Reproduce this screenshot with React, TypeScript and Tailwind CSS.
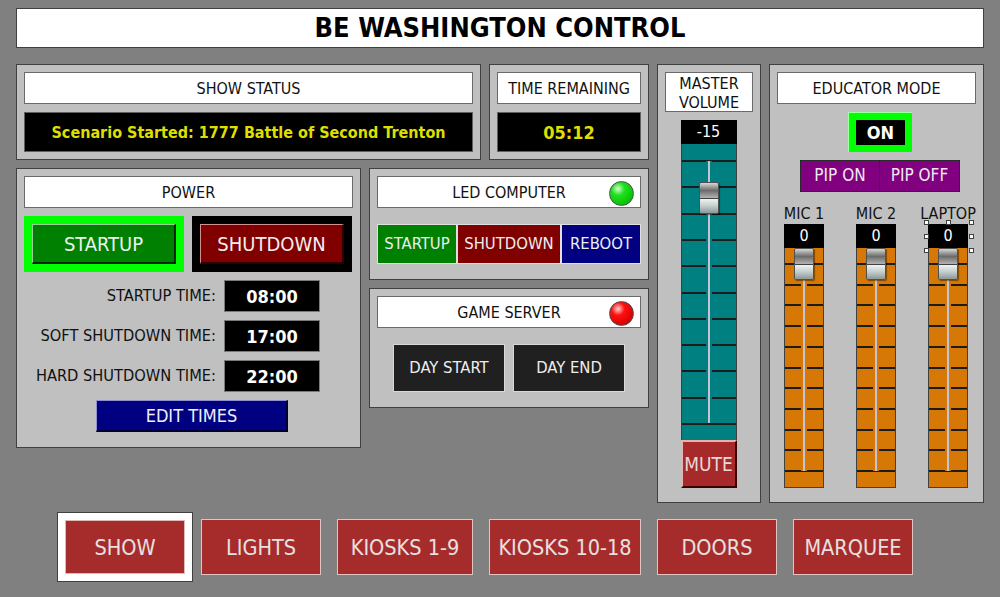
import React from 'react';

const FONT = "font-['DejaVu_Sans_Condensed','DejaVu_Sans',sans-serif]";

function Header({ children, className = '' }: { children: React.ReactNode; className?: string }) {
  return (
    <div className={`relative bg-white border border-[#6a6a6a] flex items-center justify-center text-[16px] text-[#111111] pt-[1px] ${className}`}>
      {children}
    </div>
  );
}

function Lamp({ on }: { on: boolean }) {
  return (
    <div
      className={`absolute right-[6px] top-[4px] w-[25px] h-[25px] rounded-full border border-[#505050] ${
        on
          ? 'bg-[radial-gradient(circle_at_35%_30%,#d0ffd0_0%,#20e020_30%,#00c000_80%)]'
          : 'bg-[radial-gradient(circle_at_35%_30%,#ffd0d0_0%,#ff1010_30%,#d00000_80%)]'
      }`}
    />
  );
}

function Thumb({ top }: { top: number }) {
  return (
    <div
      className="absolute left-1/2 -translate-x-1/2 w-[20px] h-[32px] border border-[#505050] rounded-[2px] flex flex-col overflow-hidden shadow-[1px_1px_1px_rgba(0,0,0,0.4)]"
      style={{ top }}
    >
      <div className="flex-1 bg-linear-to-b from-[#d8d8d8] via-[#6c6c6c] to-[#b4b4b4]" />
      <div className="h-[1px] bg-[#404040]" />
      <div className="flex-1 bg-linear-to-b from-[#eef4f4] via-[#c4cccc] to-[#8e9898]" />
    </div>
  );
}

function Fader({
  color,
  height,
  first,
  step,
  thumbTop,
  trackEnd,
}: {
  color: string;
  height: number;
  first: number;
  step: number;
  thumbTop: number;
  trackEnd: number;
}) {
  const ticks = Array.from({ length: 11 }, (_, i) => first + i * step);
  return (
    <div className="relative w-full" style={{ height }}>
      {ticks.map((t) => (
        <div key={t} className="absolute left-0 right-0 h-[2px] bg-[#1c1c1c]" style={{ top: Math.round(t) - 1 }} />
      ))}
      <div
        className="absolute left-1/2 -translate-x-1/2 w-[6px] flex justify-center"
        style={{ top: first, height: trackEnd - first, backgroundColor: color }}
      >
        <div className="w-[2px] h-full bg-[#c4c4d4]" />
      </div>
      <Thumb top={thumbTop} />
    </div>
  );
}

function MicFader({ label, handles }: { label: string; handles?: boolean }) {
  return (
    <div className="w-[40px] flex flex-col items-center">
      <div className="h-[32px] w-[40px] flex items-end justify-center text-[16px] text-[#111111] whitespace-nowrap leading-[18px]">
        <span className="relative top-[-1px]">{label}</span>
      </div>
      <div className="relative w-[40px] h-[24px] bg-black text-white text-[16px] flex items-center justify-center">
        0
        {handles &&
          [
            [-2, -2],
            [20.5, -2],
            [43, -2],
            [-2, 12],
            [43, 12],
            [-2, 26],
            [20.5, 26],
            [43, 26],
          ].map(([x, y], i) => (
            <div
              key={i}
              className="absolute w-[5px] h-[5px] bg-white border border-[#404040]"
              style={{ left: x - 2.5, top: y - 2.5 }}
            />
          ))}
      </div>
      <div className="w-[40px] bg-[#d57806] border border-[#404040] border-t-0">
        <Fader color="#d57806" height={239} first={16} step={20.7} thumbTop={0} trackEnd={223} />
      </div>
    </div>
  );
}

export default function App() {
  const tabs = [
    { name: 'LIGHTS', w: 'w-[120px]', ml: 'ml-[8px]' },
    { name: 'KIOSKS 1-9', w: 'w-[136px]', ml: 'ml-[16px]' },
    { name: 'KIOSKS 10-18', w: 'w-[152px]', ml: 'ml-[16px]' },
    { name: 'DOORS', w: 'w-[120px]', ml: 'ml-[16px]' },
    { name: 'MARQUEE', w: 'w-[120px]', ml: 'ml-[16px]' },
  ];

  const times = [
    { label: 'STARTUP TIME:', value: '08:00' },
    { label: 'SOFT SHUTDOWN TIME:', value: '17:00' },
    { label: 'HARD SHUTDOWN TIME:', value: '22:00' },
  ];

  return (
    <div className={`w-[1000px] h-[597px] bg-[#808080] overflow-hidden pt-[8px] px-[16px] ${FONT}`}>
      {/* Title */}
      <div className="h-[40px] bg-white border border-[#404040] flex items-center justify-center text-[27px] font-bold text-black pt-[1px]">
        BE WASHINGTON CONTROL
      </div>

      <div className="mt-[16px] flex gap-[8px] h-[439px]">
        {/* Left column */}
        <div className="w-[633px] flex flex-col gap-[8px]">
          <div className="flex gap-[8px] h-[96px]">
            <div className="w-[465px] bg-[#c0c0c0] border border-[#404040] p-[7px] flex flex-col gap-[8px]">
              <Header className="h-[32px]">SHOW STATUS</Header>
              <div className="h-[40px] bg-black border border-[#606060] flex items-center justify-center text-[16px] font-bold text-[#dede00] pt-[1px]">
                Scenario Started: 1777 Battle of Second Trenton
              </div>
            </div>
            <div className="w-[160px] bg-[#c0c0c0] border border-[#404040] p-[7px] flex flex-col gap-[8px]">
              <Header className="h-[32px]">TIME REMAINING</Header>
              <div className="h-[40px] bg-black border border-[#606060] flex items-center justify-center text-[18px] font-bold text-[#dede00] pt-[1px]">
                05:12
              </div>
            </div>
          </div>

          <div className="flex gap-[8px]">
            {/* Power */}
            <div className="w-[345px] h-[280px] bg-[#c0c0c0] border border-[#404040] p-[7px] flex flex-col">
              <Header className="h-[32px]">POWER</Header>
              <div className="mt-[8px] flex gap-[8px] h-[56px]">
                <div className="w-[160px] bg-[#00ff00] p-[8px]">
                  <button className="w-full h-full bg-[#008000] border-t border-l border-t-[#9ad09a] border-l-[#9ad09a] border-b-2 border-r-2 border-b-[#002800] border-r-[#002800] text-[20px] text-[#eef4ee]">
                    STARTUP
                  </button>
                </div>
                <div className="w-[160px] bg-black p-[8px]">
                  <button className="w-full h-full bg-[#800000] border-t border-l border-t-[#d09090] border-l-[#d09090] border-b-2 border-r-2 border-b-[#300000] border-r-[#300000] text-[20px] text-[#f4eeee]">
                    SHUTDOWN
                  </button>
                </div>
              </div>
              <div className="mt-[8px] flex flex-col gap-[8px]">
                {times.map((t) => (
                  <div key={t.label} className="flex h-[32px] items-center">
                    <div className="w-[192px] text-right text-[16.3px] text-[#111111]">{t.label}</div>
                    <div className="ml-[8px] w-[96px] h-[32px] bg-black border border-[#7a7a7a] flex items-center justify-center text-[18px] font-bold text-white">
                      {t.value}
                    </div>
                  </div>
                ))}
              </div>
              <button className="mt-[8px] ml-[72px] w-[192px] h-[32px] bg-[#000080] border-t border-l border-t-[#9090d0] border-l-[#9090d0] border-b-2 border-r-2 border-b-[#000030] border-r-[#000030] text-[18px] text-[#eeeef8]">
                EDIT TIMES
              </button>
            </div>

            <div className="w-[280px] flex flex-col gap-[8px]">
              {/* LED computer */}
              <div className="h-[112px] bg-[#c0c0c0] border border-[#404040] p-[7px] flex flex-col">
                <Header className="h-[32px]">
                  LED COMPUTER
                  <Lamp on />
                </Header>
                <div className="mt-[16px] flex h-[40px] text-[16.5px] text-[#eeeeee]">
                  <button className="w-[80px] bg-[#008000] border border-[#e0e0e0] pt-[1px]">STARTUP</button>
                  <button className="w-[104px] bg-[#800000] border border-[#e0e0e0] pt-[1px]">SHUTDOWN</button>
                  <button className="w-[80px] bg-[#000080] border border-[#e0e0e0] pt-[1px]">REBOOT</button>
                </div>
              </div>
              {/* Game server */}
              <div className="h-[120px] bg-[#c0c0c0] border border-[#404040] p-[7px] flex flex-col">
                <Header className="h-[32px]">
                  GAME SERVER
                  <Lamp on={false} />
                </Header>
                <div className="mt-[16px] flex justify-center gap-[8px] h-[48px] text-[16.5px] text-[#eeeeee]">
                  <button className="w-[112px] bg-[#202020] border border-[#d8d8d8] pt-[1px]">DAY START</button>
                  <button className="w-[112px] bg-[#202020] border border-[#d8d8d8] pt-[1px]">DAY END</button>
                </div>
              </div>
            </div>
          </div>
        </div>

        {/* Master volume */}
        <div className="w-[104px] bg-[#c0c0c0] border border-[#404040] p-[7px] flex flex-col items-center">
          <Header className="h-[40px] w-full flex-col leading-[19px]">
            <span>MASTER</span>
            <span>VOLUME</span>
          </Header>
          <div className="mt-[8px] w-[56px] flex flex-col -ml-[1px]">
            <div className="h-[24px] bg-black text-white text-[16px] flex items-center justify-center">-15</div>
            <div className="bg-[#008080] border-x border-[#404040]">
              <Fader color="#008080" height={296} first={17} step={26.3} thumbTop={38} trackEnd={279} />
            </div>
            <button className="h-[48px] bg-[#a62a2a] border-t-2 border-l-2 border-t-[#e8b0b0] border-l-[#e8b0b0] border-b-2 border-r-2 border-b-[#3a0000] border-r-[#3a0000] text-[19px] text-[#ead8d8]">
              MUTE
            </button>
          </div>
        </div>

        {/* Educator mode */}
        <div className="w-[215px] bg-[#c0c0c0] border border-[#404040] p-[7px] flex flex-col">
          <Header className="h-[32px]">EDUCATOR MODE</Header>
          <div className="mt-[8px] ml-[71px] w-[64px] h-[40px] bg-[#00ff00] border-t border-l border-[#a0ffa0] p-[7px]">
            <div className="w-full h-full bg-black flex items-center justify-center text-[18px] font-bold text-white">ON</div>
          </div>
          <div className="mt-[8px] ml-[23px] flex h-[32px] text-[17px] text-[#f0e8f0]">
            <button className="w-[80px] bg-[#800080] border border-[#2a2a2a]">PIP ON</button>
            <button className="w-[80px] bg-[#800080] border border-[#2a2a2a] border-l-0">PIP OFF</button>
          </div>
          <div className="ml-[7px] flex gap-[32px]">
            <MicFader label="MIC 1" />
            <MicFader label="MIC 2" />
            <MicFader label="LAPTOP" handles />
          </div>
        </div>
      </div>

      {/* Tabs */}
      <div className="mt-[9px] ml-[41px] flex items-center h-[70px]">
        <div className="w-[136px] h-[70px] bg-white border border-[#404040] p-[7px]">
          <button className="w-full h-full bg-[#a62c2c] border border-[#e0b8b8] text-[21.5px] text-[#e8e0e0] pt-[3px]">SHOW</button>
        </div>
        {tabs.map((t) => (
          <button
            key={t.name}
            className={`${t.w} ${t.ml} h-[56px] bg-[#a62c2c] border border-[#e0c4c4] text-[21.5px] text-[#e8e0e0] pt-[3px]`}
          >
            {t.name}
          </button>
        ))}
      </div>
    </div>
  );
}
